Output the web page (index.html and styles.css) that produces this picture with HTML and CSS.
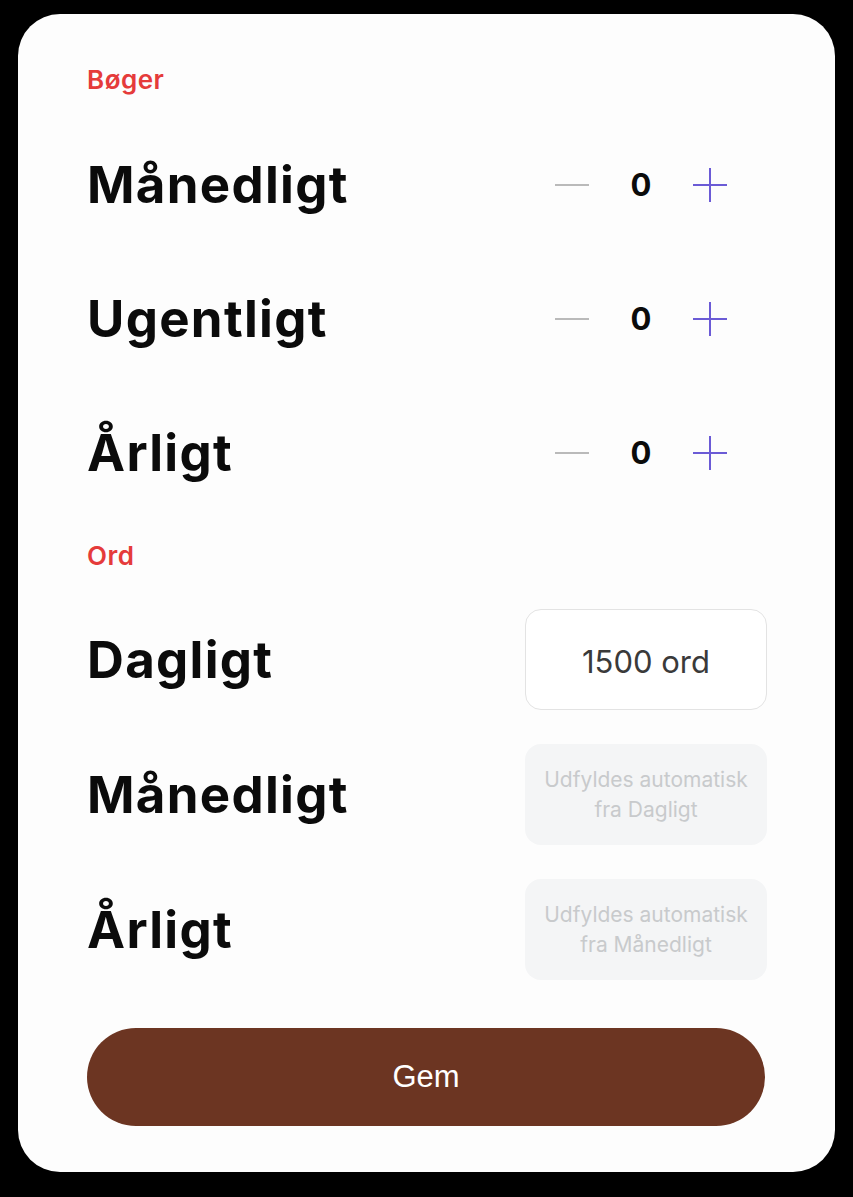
FILE: index.html
```html
<!DOCTYPE html>
<html lang="da">
<head>
<meta charset="utf-8">
<title>Mål</title>
<link rel="stylesheet" href="styles.css">
</head>
<body>
<main class="card">
  <h2 class="section-label">Bøger</h2>
  <div class="row">
    <span class="row-title">Månedligt</span>
    <div class="stepper">
      <button class="step minus" aria-label="Mindre"><svg viewBox="0 0 34 34" width="34" height="34"><line x1="0" y1="17" x2="34" y2="17"/></svg></button>
      <span class="count">0</span>
      <button class="step plus" aria-label="Mere"><svg viewBox="0 0 34 34" width="34" height="34"><line x1="0" y1="17" x2="34" y2="17"/><line x1="17" y1="0" x2="17" y2="34"/></svg></button>
    </div>
  </div>
  <div class="row">
    <span class="row-title">Ugentligt</span>
    <div class="stepper">
      <button class="step minus" aria-label="Mindre"><svg viewBox="0 0 34 34" width="34" height="34"><line x1="0" y1="17" x2="34" y2="17"/></svg></button>
      <span class="count">0</span>
      <button class="step plus" aria-label="Mere"><svg viewBox="0 0 34 34" width="34" height="34"><line x1="0" y1="17" x2="34" y2="17"/><line x1="17" y1="0" x2="17" y2="34"/></svg></button>
    </div>
  </div>
  <div class="row">
    <span class="row-title">Årligt</span>
    <div class="stepper">
      <button class="step minus" aria-label="Mindre"><svg viewBox="0 0 34 34" width="34" height="34"><line x1="0" y1="17" x2="34" y2="17"/></svg></button>
      <span class="count">0</span>
      <button class="step plus" aria-label="Mere"><svg viewBox="0 0 34 34" width="34" height="34"><line x1="0" y1="17" x2="34" y2="17"/><line x1="17" y1="0" x2="17" y2="34"/></svg></button>
    </div>
  </div>

  <h2 class="section-label section-label--words">Ord</h2>
  <div class="word-rows">
    <div class="word-row">
      <span class="row-title">Dagligt</span>
      <div class="field">1500 ord</div>
    </div>
    <div class="word-row">
      <span class="row-title">Månedligt</span>
      <div class="field field--auto">Udfyldes automatisk<br>fra Dagligt</div>
    </div>
    <div class="word-row">
      <span class="row-title">Årligt</span>
      <div class="field field--auto">Udfyldes automatisk<br>fra Månedligt</div>
    </div>
  </div>

  <button class="save">Gem</button>
</main>
</body>
</html>
```

FILE: styles.css
```css
html, body {
  margin: 0;
  padding: 0;
  background: #000;
}

body {
  font-family: Inter, "Noto Sans", sans-serif;
  padding: 14px 18px 25px;
}

.card {
  box-sizing: border-box;
  width: 817px;
  height: 1158px;
  background: #fdfdfd;
  border-radius: 42px;
  padding: 50px 68px 0 69px;
  display: flex;
  flex-direction: column;
}

.section-label {
  margin: 0;
  font-size: 26px;
  line-height: 32px;
  font-weight: 600;
  color: #e53b3b;
  letter-spacing: 0.5px;
}

.row {
  height: 134px;
  display: flex;
  align-items: center;
  justify-content: space-between;
}

.section-label + .row {
  margin-top: 22px;
}

.row-title {
  font-size: 51px;
  font-weight: 700;
  color: #0b0b0b;
  letter-spacing: 1.3px;
  line-height: 60px;
}

.stepper {
  display: flex;
  align-items: center;
  margin-right: 40px;
}

.step {
  width: 34px;
  height: 34px;
  padding: 0;
  border: 0;
  background: none;
  display: block;
}

.step svg {
  display: block;
}

.minus line {
  stroke: #a3a3a3;
  stroke-width: 1.5;
}

.plus line {
  stroke: #6b5bd6;
  stroke-width: 2;
}

.count {
  width: 104px;
  text-align: center;
  font-size: 31px;
  font-weight: 700;
  color: #0b0b0b;
  line-height: 34px;
}

.section-label--words {
  margin-top: 20px;
}

.word-rows {
  margin-top: 37px;
  display: flex;
  flex-direction: column;
  gap: 34px;
}

.word-row {
  display: flex;
  align-items: center;
  justify-content: space-between;
  height: 101px;
}

.field {
  box-sizing: border-box;
  width: 242px;
  height: 101px;
  border-radius: 16px;
  border: 1px solid #e3e3e3;
  background: #fff;
  display: flex;
  align-items: center;
  justify-content: center;
  text-align: center;
  font-size: 31px;
  font-weight: 400;
  color: #3a3a3a;
  padding-top: 4px;
}

.field--auto {
  border-color: transparent;
  background: #f4f5f6;
  font-size: 21px;
  line-height: 30px;
  color: #c8cacc;
  padding-top: 0;
}

.save {
  margin-top: 48px;
  width: 678px;
  height: 98px;
  border: 0;
  border-radius: 49px;
  background: #6c3522;
  color: #fff;
  font-family: "Liberation Sans", Arial, sans-serif;
  font-size: 31px;
  font-weight: 400;
}
```
